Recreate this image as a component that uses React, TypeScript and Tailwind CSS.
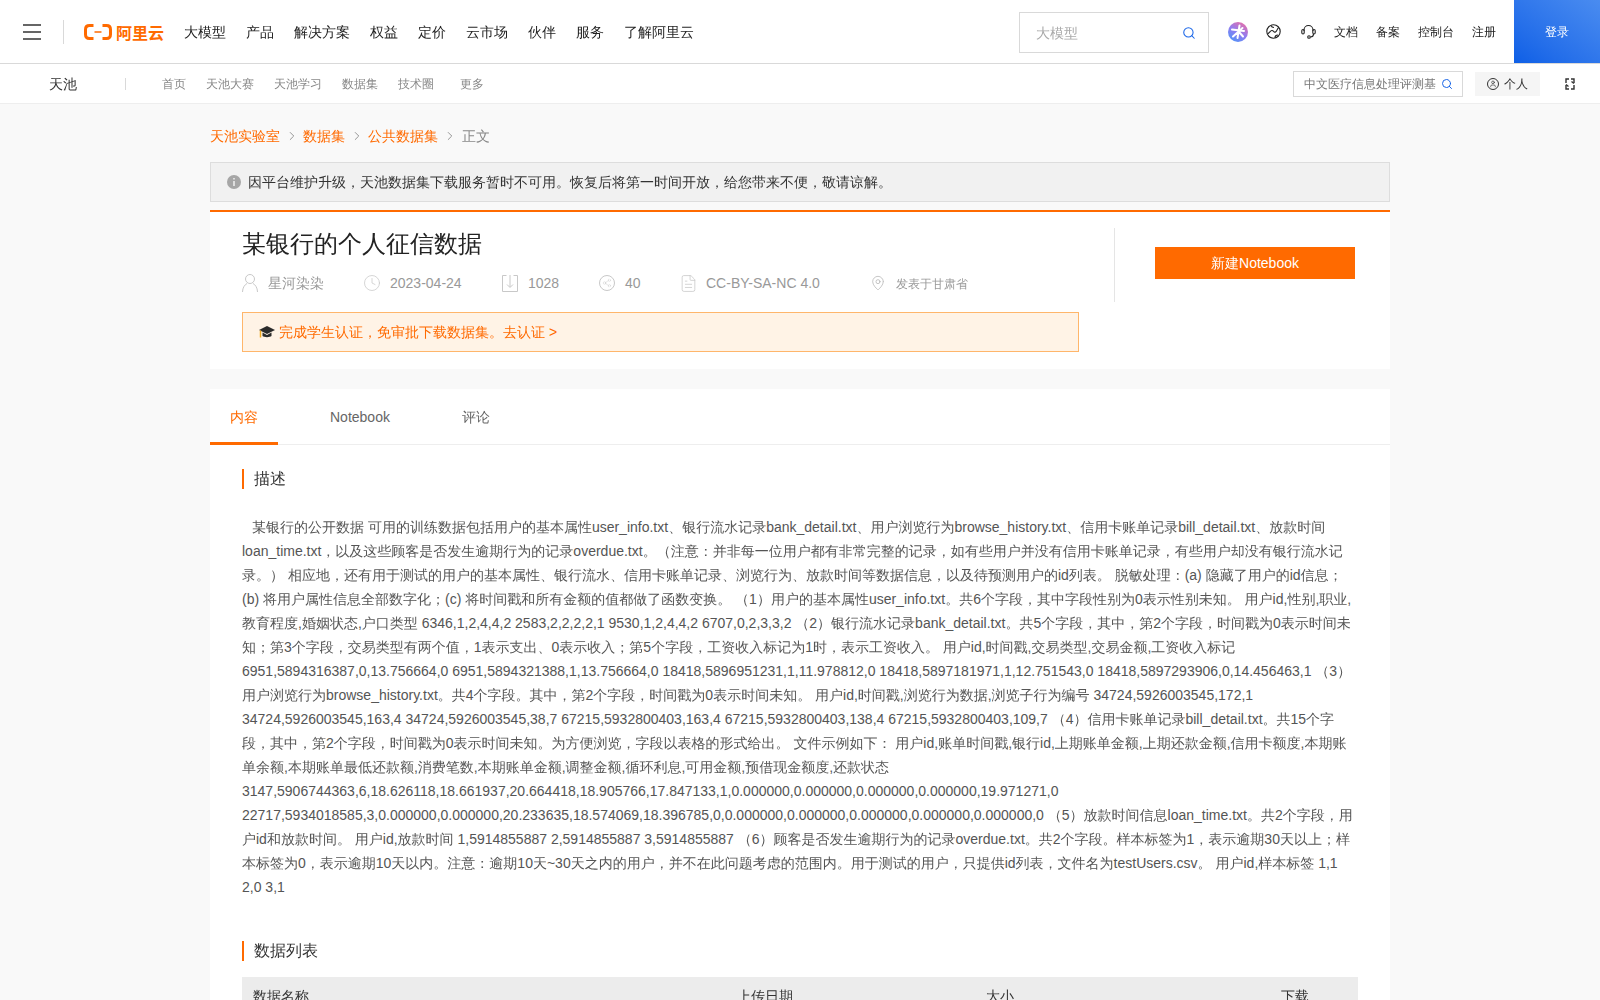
import { ChevronRight, Clock, FileText, MapPin, Search, Share2, User } from 'lucide-react'

const FONT = "font-['Liberation_Sans','WenQuanYi_Zen_Hei','WenQuanYi_Micro_Hei','Droid_Sans_Fallback','Noto_Sans_CJK_SC',sans-serif]"

const NAV_ITEMS = ['大模型', '产品', '解决方案', '权益', '定价', '云市场', '伙伴', '服务', '了解阿里云']

const BODY_TEXT =
  '某银行的公开数据 可用的训练数据包括用户的基本属性user_info.txt、银行流水记录bank_detail.txt、用户浏览行为browse_history.txt、信用卡账单记录bill_detail.txt、放款时间loan_time.txt，以及这些顾客是否发生逾期行为的记录overdue.txt。（注意：并非每一位用户都有非常完整的记录，如有些用户并没有信用卡账单记录，有些用户却没有银行流水记录。） 相应地，还有用于测试的用户的基本属性、银行流水、信用卡账单记录、浏览行为、放款时间等数据信息，以及待预测用户的id列表。 脱敏处理：(a) 隐藏了用户的id信息；(b) 将用户属性信息全部数字化；(c) 将时间戳和所有金额的值都做了函数变换。 （1）用户的基本属性user_info.txt。共6个字段，其中字段性别为0表示性别未知。 用户id,性别,职业,教育程度,婚姻状态,户口类型 6346,1,2,4,4,2 2583,2,2,2,2,1 9530,1,2,4,4,2 6707,0,2,3,3,2 （2）银行流水记录bank_detail.txt。共5个字段，其中，第2个字段，时间戳为0表示时间未知；第3个字段，交易类型有两个值，1表示支出、0表示收入；第5个字段，工资收入标记为1时，表示工资收入。 用户id,时间戳,交易类型,交易金额,工资收入标记 6951,5894316387,0,13.756664,0 6951,5894321388,1,13.756664,0 18418,5896951231,1,11.978812,0 18418,5897181971,1,12.751543,0 18418,5897293906,0,14.456463,1 （3）用户浏览行为browse_history.txt。共4个字段。其中，第2个字段，时间戳为0表示时间未知。 用户id,时间戳,浏览行为数据,浏览子行为编号 34724,5926003545,172,1 34724,5926003545,163,4 34724,5926003545,38,7 67215,5932800403,163,4 67215,5932800403,138,4 67215,5932800403,109,7 （4）信用卡账单记录bill_detail.txt。共15个字段，其中，第2个字段，时间戳为0表示时间未知。为方便浏览，字段以表格的形式给出。 文件示例如下： 用户id,账单时间戳,银行id,上期账单金额,上期还款金额,信用卡额度,本期账单余额,本期账单最低还款额,消费笔数,本期账单金额,调整金额,循环利息,可用金额,预借现金额度,还款状态 3147,5906744363,6,18.626118,18.661937,20.664418,18.905766,17.847133,1,0.000000,0.000000,0.000000,0.000000,19.971271,0 22717,5934018585,3,0.000000,0.000000,20.233635,18.574069,18.396785,0,0.000000,0.000000,0.000000,0.000000,0.000000,0 （5）放款时间信息loan_time.txt。共2个字段，用户id和放款时间。 用户id,放款时间 1,5914855887 2,5914855887 3,5914855887 （6）顾客是否发生逾期行为的记录overdue.txt。共2个字段。样本标签为1，表示逾期30天以上；样本标签为0，表示逾期10天以内。注意：逾期10天~30天之内的用户，并不在此问题考虑的范围内。用于测试的用户，只提供id列表，文件名为testUsers.csv。 用户id,样本标签 1,1 2,0 3,1'

const LogoMark = () => (
  <svg width="28" height="16" viewBox="0 0 28 16" fill="none">
    <path d="M9.500 1.500H5.500C3 1.500 1.500 3 1.500 5.500v5c0 2.500 1.500 4 4 4h4" stroke="#ff6a00" strokeWidth="3" />
    <path d="M18.500 1.500h4c2.500 0 4 1.500 4 4v5c0 2.500-1.500 4-4 4h-4" stroke="#ff6a00" strokeWidth="3" />
    <path d="M10.500 8h7" stroke="#ff6a00" strokeWidth="1.500" />
  </svg>
)

const MenuIcon = () => (
  <svg width="18" height="16" viewBox="0 0 18 16" stroke="#666" strokeWidth="2">
    <path d="M0 1h18M0 8h18M0 15h18" />
  </svg>
)

const SparkIcon = () => (
  <svg width="20" height="20" viewBox="0 0 20 20">
    <defs>
      <linearGradient id="spark" x1="0.800" y1="0" x2="0.200" y2="1">
        <stop offset="0" stopColor="#ea6fa6" />
        <stop offset="0.500" stopColor="#917cf0" />
        <stop offset="1" stopColor="#4f94f8" />
      </linearGradient>
    </defs>
    <circle cx="10" cy="10" r="10" fill="url(#spark)" />
    <path d="M11.500 3.500 9.500 16M4 7.500l12 1.500M5 14.500l9.500-8.500M11 10l4 4.500" stroke="#fff" strokeWidth="2" strokeLinecap="round" />
  </svg>
)

const GlobeIcon = () => (
  <svg width="15" height="15" viewBox="0 0 15 15" fill="none" stroke="#222" strokeWidth="1.100">
    <circle cx="7.500" cy="7.500" r="6.700" />
    <path d="M1.500 10c2-.5 2.500-3.500 4.500-3.500S7.500 9 9.500 8s1.500-4 3.500-4.500M5 1.500c.5 1.500 2 2 3 2M9 13.500c0-1.500 1-2.500 3-2.500" />
  </svg>
)

const HeadsetIcon = () => (
  <svg width="15" height="15" viewBox="0 0 15 15" fill="none" stroke="#222" strokeWidth="1.100">
    <path d="M3 7V6a4.500 4.500 0 0 1 9 0v1" />
    <rect x="0.800" y="5.500" width="2.400" height="4.500" rx="1.200" />
    <rect x="11.800" y="5.500" width="2.400" height="4.500" rx="1.200" />
    <path d="M12.500 10c0 2-1.500 3-3 3" />
    <circle cx="8" cy="13" r="1.300" />
  </svg>
)

const InfoIcon = () => (
  <svg width="14" height="14" viewBox="0 0 14 14">
    <circle cx="7" cy="7" r="7" fill="#a6a6a6" />
    <path d="M7 3v1.500M7 6v5" stroke="#f1f1f1" strokeWidth="1.500" />
  </svg>
)

const PersonIcon = () => (
  <svg width="16" height="18" viewBox="0 0 16 18" fill="none" stroke="#c8c8c8" strokeWidth="1">
    <circle cx="8" cy="5" r="4.500" />
    <path d="M.5 18c0-4.500 2.500-7.500 4.500-8.500M15.500 18c0-4.500-2.500-7.500-4.500-8.500" />
  </svg>
)

const DownloadBoxIcon = () => (
  <svg width="16" height="18" viewBox="0 0 16 18" fill="none" stroke="#c8c8c8" strokeWidth="1">
    <path d="M4.500 1.500h-4v16h15v-16h-4M8 1v12M5 10.500 8 13.500l3-3" />
  </svg>
)

const CapIcon = () => (
  <svg width="16" height="16" viewBox="0 0 16 16">
    <path d="M8 2 16 6 8 10 0 6Z" fill="#2b2b2b" />
    <path d="M3.500 8.500v3.500c1.500 1.500 7.500 1.500 9 0V8.500L8 11Z" fill="#2b2b2b" />
    <path d="M1.500 6.500v7" stroke="#f0a81e" strokeWidth="1.500" />
  </svg>
)

const SwitchIcon = () => (
  <svg className="mx-[25px]" width="10" height="12" viewBox="0 0 10 12" fill="none" stroke="#333" strokeWidth="1.400">
    <path d="M4 1H1v4M1 7v4h3M6 1h3v4M6 11h3V7" />
    <path d="M6.500 3.500 9 5.500M3.500 8.500 1 6.500" />
  </svg>
)

const SectionTitle = ({ title }: { title: string }) => (
  <div className="flex h-5 items-center border-l-2 border-[#ff6a00] pl-2.5 text-base leading-5 text-[#333]">{title}</div>
)

const MetaItem = ({ icon, text, className }: { icon: React.ReactNode; text: string; className: string }) => (
  <div className={`flex items-center ${className}`}>
    <span className="mr-2.5 flex w-4 justify-center">{icon}</span>
    <span>{text}</span>
  </div>
)

const Crumb = ({ text }: { text: string }) => (
  <>
    <span className="text-[#ff6a00]">{text}</span>
    <ChevronRight className="mx-[4.500px] h-3.5 w-3.5 text-[#888]" strokeWidth={1.500} />
  </>
)

export default function App() {
  return (
    <div lang="zh-CN" className={`h-screen overflow-hidden bg-[#f9f9f9] ${FONT}`}>
      {/* Barra principal */}
      <header className="flex h-16 items-start border-b border-[#d9d9d9] bg-white">
        <div className="flex h-[63px] flex-1 items-center">
          <span className="ml-[23px] flex"><MenuIcon /></span>
          <div className="ml-[22px] h-6 w-px bg-[#d9d9d9]" />
          <div className="ml-5 flex w-[80px] items-center">
            <LogoMark />
            <span className="ml-1 font-['Noto_Sans_CJK_SC',sans-serif] text-base leading-none font-bold whitespace-nowrap text-[#ff6a00]">阿里云</span>
          </div>
          <nav className="ml-5 flex gap-5 text-sm text-[#222]">
            {NAV_ITEMS.map(item => (
              <span key={item}>{item}</span>
            ))}
          </nav>
        </div>
        <div className="mt-3 flex h-[41px] w-[190px] items-center justify-between border border-[#d9d9d9] pr-[12px] pl-4 text-sm text-[#aaa]">
          大模型
          <Search className="h-3.5 w-3.5 text-[#1a66e8]" strokeWidth={1.800} />
        </div>
        <div className="flex h-[63px] items-center text-xs text-[#222]">
          <span className="ml-[19px] flex"><SparkIcon /></span>
          <span className="ml-[18px] flex"><GlobeIcon /></span>
          <span className="ml-5 flex"><HeadsetIcon /></span>
          <span className="ml-[18px]">文档</span>
          <span className="ml-[18px]">备案</span>
          <span className="ml-[18px]">控制台</span>
          <span className="ml-[18px]">注册</span>
        </div>
        <div className="ml-[18px] flex h-[63px] w-[86px] items-center justify-center bg-gradient-to-tr from-[#0d5fe6] to-[#4a8cf0] text-xs text-white">
          登录
        </div>
      </header>

      {/* Barra de Tianchi */}
      <div className="flex h-10 items-center border-b border-[#eee] bg-white">
        <span className="ml-[49px] text-sm text-[#333]">天池</span>
        <div className="ml-[48px] h-3 w-px bg-[#d9d9d9]" />
        <div className="ml-9 flex pt-px text-xs text-[#888]">
          <span>首页</span>
          <span className="ml-5">天池大赛</span>
          <span className="ml-5">天池学习</span>
          <span className="ml-5">数据集</span>
          <span className="ml-5">技术圈</span>
          <span className="ml-[26px]">更多</span>
        </div>
        <div className="mr-3 ml-auto flex h-[26px] w-[170px] items-center justify-between border border-[#d9d9d9] pr-[9px] pl-2.5 text-xs whitespace-nowrap text-[#777]">
          <span className="pt-px">中文医疗信息处理评测基</span>
          <Search className="h-3 w-3 shrink-0 text-[#1a66e8]" strokeWidth={2} />
        </div>
        <div className="flex h-6 w-[65px] items-center justify-center gap-[5px] bg-[#f5f5f5] text-xs text-[#333]">
          <User className="h-3 w-3 rounded-full border border-[#333] p-px" strokeWidth={2} />
          <span className="pt-px">个人</span>
        </div>
        <SwitchIcon />
      </div>

      <main className="mx-auto w-[1180px]">
        {/* Migas */}
        <div className="flex h-[58px] items-center pt-1.5 text-sm">
          <Crumb text="天池实验室" />
          <Crumb text="数据集" />
          <Crumb text="公共数据集" />
          <span className="ml-px text-[#888]">正文</span>
        </div>

        {/* Aviso */}
        <div className="flex h-10 items-center gap-[7px] border border-[#ddd] bg-[#f1f1f1] pl-4 text-sm text-[#333]">
          <InfoIcon />
          因平台维护升级，天池数据集下载服务暂时不可用。恢复后将第一时间开放，给您带来不便，敬请谅解。
        </div>

        {/* Cabecera del dataset */}
        <section className="mt-2 flex h-[159px] border-t-2 border-[#ff6a00] bg-white pl-8">
          <div className="w-[837px]">
            <h1 className="mt-4 text-2xl leading-8 text-[#222]">某银行的个人征信数据</h1>
            <div className="relative mt-[11px] flex h-6 items-center text-sm text-[#999]">
              <MetaItem icon={<PersonIcon />} text="星河染染" className="w-[122px]" />
              <MetaItem icon={<Clock className="h-[18px] w-[18px] shrink-0 text-[#c8c8c8]" strokeWidth={1} />} text="2023-04-24" className="w-[138px]" />
              <MetaItem icon={<DownloadBoxIcon />} text="1028" className="w-[97px]" />
              <MetaItem icon={<Share2 className="h-4 w-4 rounded-full border border-[#c8c8c8] p-0.5 text-[#c8c8c8]" strokeWidth={1} />} text="40" className="w-[81px]" />
              <MetaItem icon={<FileText className="h-[19px] w-[19px] shrink-0 text-[#c8c8c8]" strokeWidth={1} />} text="CC-BY-SA-NC 4.0" className="w-[190px]" />
              <div className="flex items-center text-xs">
                <MapPin className="mr-2.5 h-4 w-4 text-[#aaa]" strokeWidth={1} />
                <span className="pt-0.5">发表于甘肃省</span>
              </div>
            </div>
            <div className="mt-[17px] flex h-10 items-center gap-1 border border-[#ffb66b] bg-[#fff3e6] pl-4 text-sm text-[#ff6a00]">
              <CapIcon />
              完成学生认证，免审批下载数据集。去认证 &gt;
            </div>
          </div>
          <div className="mt-4 ml-[35px] h-[74px] w-px bg-[#e5e5e5]" />
          <div className="mt-[35px] ml-10 flex h-8 w-[200px] items-center justify-center bg-[#ff6a00] text-sm text-white">
            新建Notebook
          </div>
        </section>

        {/* Contenido */}
        <section className="mt-5 bg-white pb-10">
          <div className="flex h-[56px] gap-8 border-b border-[#eee] text-sm text-[#666]">
            <div className="flex h-[56px] items-center border-b-3 border-[#ff6a00] px-5 pt-[3px] text-[#ff6a00]">内容</div>
            <div className="flex h-[56px] items-center border-b-3 border-transparent px-5 pt-[3px]">Notebook</div>
            <div className="flex h-[56px] items-center border-b-3 border-transparent px-5 pt-[3px]">评论</div>
          </div>
          <div className="px-8">
            <div className="mt-6">
              <SectionTitle title="描述" />
            </div>
            <p className="mt-[26px] text-sm leading-6 break-words text-[#555] indent-[10px]">{BODY_TEXT}</p>
            <div className="mt-[42px]">
              <SectionTitle title="数据列表" />
            </div>
            <div className="mt-4 flex h-[38px] items-center bg-[#ececec] text-sm text-[#333]">
              <span className="ml-[11px] w-[484px]">数据名称</span>
              <span className="w-[249px]">上传日期</span>
              <span className="w-[295px]">大小</span>
              <span>下载</span>
            </div>
          </div>
        </section>
      </main>
    </div>
  )
}
